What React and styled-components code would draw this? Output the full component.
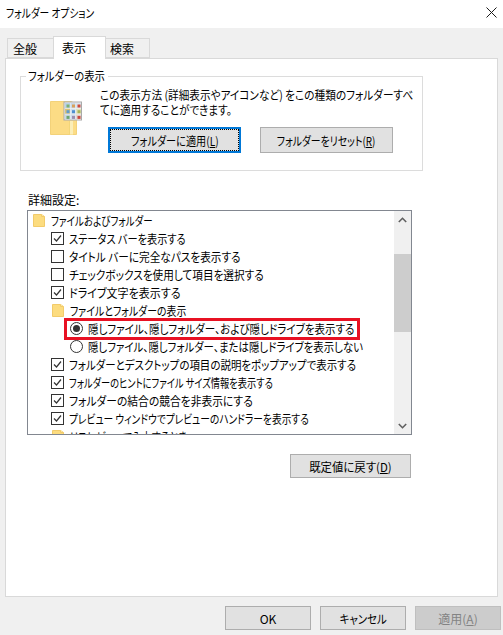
import React from "react";
import styled, { createGlobalStyle } from "styled-components";

const GlobalStyle = createGlobalStyle`
  html, body {
    margin: 0;
    padding: 0;
    background: #f0f0f0;
  }
  * {
    box-sizing: border-box;
  }
`;

const Dialog = styled.div`
  width: 503px;
  height: 635px;
  display: flex;
  flex-direction: column;
  overflow: hidden;
  background: #f0f0f0;
  color: #000;
  font-family: "Noto Sans CJK JP", "Noto Sans", sans-serif;
  font-size: 12px;
  font-feature-settings: "palt";
  line-height: 15px;
  white-space: nowrap;
`;

// Noto kana are wider than the dialog font, so texts get squeezed to the same width
const Squeeze = styled.span`
  display: inline-block;
  transform: scaleX(${(p) => p.$x});
  transform-origin: ${(p) => (p.$center ? "center" : "left")};
`;

const TitleBar = styled.div`
  height: 28px;
  flex: none;
  display: flex;
  align-items: center;
  justify-content: space-between;
  padding: 0 6px 4px 6px;
  background: #fff;
`;

const TabBar = styled.div`
  height: 22px;
  margin-top: 8px;
  padding-left: 7px;
  flex: none;
  display: flex;
  align-items: flex-end;
  position: relative;
  z-index: 1;
`;

const Tab = styled.div`
  height: ${(p) => (p.$active ? 23 : 20)}px;
  width: ${(p) => p.$width}px;
  margin-bottom: ${(p) => (p.$active ? -1 : 0)}px;
  margin-left: ${(p) => (p.$first ? 0 : -1)}px;
  padding: ${(p) => (p.$active ? "0 11px 2px 0" : "0 11px 0 0")};
  display: flex;
  align-items: center;
  justify-content: center;
  font-size: 12px;
  background: ${(p) => (p.$active ? "#fff" : "#f0f0f0")};
  border: 1px solid #d9d9d9;
  border-bottom: ${(p) => (p.$active ? "none" : "1px solid #d9d9d9")};
`;

const Panel = styled.div`
  width: 493px;
  height: 539px;
  margin-left: 5px;
  flex: none;
  padding: 9px 14px 0 14px;
  display: flex;
  flex-direction: column;
  align-items: flex-start;
  background: #fff;
  border: 1px solid #d9d9d9;
`;

const Group = styled.fieldset`
  width: 403px;
  height: 103px;
  min-width: 0;
  margin: 0;
  padding: 0 0 0 29px;
  display: flex;
  border: 1px solid #dcdcdc;
`;

const GroupLabel = styled.legend`
  margin-left: -24px;
  padding: 0 1px 0 2px;
  width: 82px;
  height: 16px;
  line-height: 16px;
`;

const GroupIcon = styled.svg`
  width: 32px;
  height: 34px;
  margin-top: 17px;
  flex: none;
`;

const GroupContent = styled.div`
  margin-left: 18px;
  padding-top: 3px;
`;

const GroupLine = styled.div`
  height: 15px;
`;

const GroupButtons = styled.div`
  display: flex;
  gap: 19px;
  margin: 10px 0 0 8px;
`;

const Button = styled.button`
  width: ${(p) => p.$width}px;
  height: ${(p) => p.$height}px;
  margin: 0;
  padding: 0;
  flex: none;
  overflow: hidden;
  font: inherit;
  font-feature-settings: inherit;
  color: ${(p) => (p.$disabled ? "#838383" : "#000")};
  background: ${(p) => (p.$disabled ? "#cccccc" : "#e1e1e1")};
  border: ${(p) =>
    p.$focused ? "2px solid #0078d7" : `1px solid ${p.$disabled ? "#bfbfbf" : "#adadad"}`};
  outline: ${(p) => (p.$focused ? "1px dotted #000" : "none")};
  outline-offset: ${(p) => (p.$focused ? "-3px" : "0")};
`;

const SectionLabel = styled.div`
  height: 15px;
  margin: 21px 0 0 8px;
`;

const ListBox = styled.div`
  width: 385px;
  height: 225px;
  margin: 3px 0 0 7px;
  flex: none;
  display: flex;
  background: #fff;
  border: 1px solid #828790;
  align-self: flex-start;
`;

const ListBody = styled.div`
  flex: 1;
  min-width: 0;
  overflow: hidden;
`;

const Row = styled.div`
  height: 18px;
  padding-left: ${(p) => p.$indent}px;
  display: flex;
  align-items: center;
  gap: ${(p) => p.$gap}px;
  position: relative;
`;

const Highlight = styled.div`
  position: absolute;
  left: 36px;
  top: -1px;
  width: 296px;
  height: 22px;
  border: 3px solid #e81123;
  pointer-events: none;
`;

const CheckBox = styled.span`
  width: 13px;
  height: 13px;
  flex: none;
  display: flex;
  background: #fff;
  border: 1px solid #333;
`;

const Radio = styled.span`
  width: 13px;
  height: 13px;
  flex: none;
  display: flex;
  align-items: center;
  justify-content: center;
  background: #fff;
  border: 1px solid #333;
  border-radius: 50%;
`;

const RadioDot = styled.span`
  width: 7px;
  height: 7px;
  background: #333;
  border-radius: 50%;
`;

const ScrollBar = styled.div`
  width: 17px;
  flex: none;
  display: flex;
  flex-direction: column;
  background: #f0f0f0;
`;

const ScrollArrow = styled.div`
  height: 17px;
  flex: none;
  display: flex;
  align-items: center;
  justify-content: center;
`;

const ScrollTrack = styled.div`
  flex: 1;
  padding-top: 26px;
`;

const ScrollThumb = styled.div`
  height: 78px;
  background: #cdcdcd;
`;

const DefaultsButton = styled(Button)`
  margin: 19px 0 0 270px;
`;

const Footer = styled.div`
  margin-top: 9px;
  margin-left: 225px;
  display: flex;
  gap: 9px;
`;

const CloseIcon = () => (
  <svg width="11" height="11" viewBox="0 0 11 11">
    <path d="M0.5 0.5L10.5 10.5M10.5 0.5L0.5 10.5" stroke="#1a1a1a" fill="none" />
  </svg>
);

const SmallFolder = () => (
  <svg width="12" height="13" viewBox="0 0 12 13" style={{ flex: "none" }}>
    <path d="M0.5 0.5H8.5L11.5 2.5V12.5H0.5Z" fill="#fcdc7f" stroke="#f2cb6a" />
    <path d="M8.5 0.5V2.5H11.5" fill="#fdeaa8" stroke="#f2cb6a" />
  </svg>
);

const CheckMark = () => (
  <svg width="11" height="11" viewBox="0 0 11 11">
    <path d="M2 5.5L4.5 8L9 2.5" stroke="#333" strokeWidth="1.2" fill="none" />
  </svg>
);

const Arrow = ({ up }) => (
  <svg width="9" height="6" viewBox="0 0 9 6">
    <path
      d={up ? "M0.8 5L4.5 1.3L8.2 5" : "M0.8 1L4.5 4.7L8.2 1"}
      stroke="#606060"
      strokeWidth="1.6"
      fill="none"
    />
  </svg>
);

const cells = [
  ["#b9d2e8", "#7fb06f"],
  ["#c7d9ea", "#d9a15c"],
  ["#d9e3ee", "#cf4b3c"],
  ["#d9c27a", "#5f9bcf"],
  ["#cfe0ee", "#4f8fd0"],
  ["#dfe3c0", "#a8b45a"],
  ["#c9d8e6", "#6fa56a"],
  ["#cfdceb", "#9c8fb0"],
  ["#e5d6cf", "#c9493f"],
];

const BigFolder = () => (
  <GroupIcon viewBox="0 0 32 34">
    <path d="M0.5 0.5H21L26.5 3V33.5H0.5Z" fill="#fcdc85" stroke="#f3d27a" />
    <path d="M21.5 20V33.5" stroke="#fbeeb8" strokeWidth="3" />
    <path d="M19.5 20V33" stroke="#f3d679" />
    <rect x="14" y="1" width="17.5" height="18" fill="#f2f2f2" stroke="#a9a9a9" />
    {cells.map(([bg, fg], i) => {
      const x = 15 + (i % 3) * 5.5;
      const y = 2 + Math.floor(i / 3) * 5.7;
      return (
        <g key={i}>
          <rect x={x} y={y} width="5" height="5" fill={bg} />
          <rect x={x + 1.5} y={y + 1.5} width="3" height="3" fill={fg} />
        </g>
      );
    })}
  </GroupIcon>
);

const rows = [
  { type: "root", x: 0.79, text: "ファイルおよびフォルダー" },
  { type: "check", x: 0.85, checked: true, text: "ステータス バーを表示する" },
  { type: "check", x: 0.887, text: "タイトル バーに完全なパスを表示する" },
  { type: "check", x: 0.886, text: "チェックボックスを使用して項目を選択する" },
  { type: "check", x: 0.917, checked: true, text: "ドライブ文字を表示する" },
  { type: "folder", x: 0.824, text: "ファイルとフォルダーの表示" },
  { type: "radio", x: 0.875, checked: true, mark: true, text: "隠しファイル、隠しフォルダー、および隠しドライブを表示する" },
  { type: "radio", x: 0.867, text: "隠しファイル、隠しフォルダー、または隠しドライブを表示しない" },
  { type: "check", x: 0.872, checked: true, text: "フォルダーとデスクトップの項目の説明をポップアップで表示する" },
  { type: "check", x: 0.77, checked: true, text: "フォルダーのヒントにファイル サイズ情報を表示する" },
  { type: "check", x: 0.897, checked: true, text: "フォルダーの結合の競合を非表示にする" },
  { type: "check", x: 0.81, checked: true, text: "プレビュー ウィンドウでプレビューのハンドラーを表示する" },
  { type: "folder", x: 0.82, text: "リスト ビューで入力するとき" },
];

const SettingRow = ({ type, checked, mark, text, x }) => {
  const label = <Squeeze $x={x}>{text}</Squeeze>;
  if (type === "root") {
    return (
      <Row $indent={5} $gap={6}>
        <SmallFolder />
        {label}
      </Row>
    );
  }
  if (type === "folder") {
    return (
      <Row $indent={24} $gap={6}>
        <SmallFolder />
        {label}
      </Row>
    );
  }
  if (type === "radio") {
    return (
      <Row $indent={42} $gap={5}>
        <Radio>{checked && <RadioDot />}</Radio>
        {label}
        {mark && <Highlight />}
      </Row>
    );
  }
  return (
    <Row $indent={23} $gap={5}>
      <CheckBox>{checked && <CheckMark />}</CheckBox>
      {label}
    </Row>
  );
};

export default function App() {
  return (
    <Dialog>
      <GlobalStyle />
      <TitleBar>
        <Squeeze $x={0.81}>フォルダー オプション</Squeeze>
        <CloseIcon />
      </TitleBar>
      <TabBar>
        <Tab $first $width={47}>全般</Tab>
        <Tab $active $width={53}>表示</Tab>
        <Tab $width={45}>検索</Tab>
      </TabBar>
      <Panel>
        <Group>
          <GroupLabel>
            <Squeeze $x={0.865}>フォルダーの表示</Squeeze>
          </GroupLabel>
          <BigFolder />
          <GroupContent>
            <GroupLine>
              <Squeeze $x={0.887}>この表示方法 (詳細表示やアイコンなど) をこの種類のフォルダーすべ</Squeeze>
            </GroupLine>
            <GroupLine>
              <Squeeze $x={0.885}>てに適用することができます。</Squeeze>
            </GroupLine>
            <GroupButtons>
              <Button $focused $width={133} $height={26}>
                <Squeeze $center $x={0.846}>フォルダーに適用(<u>L</u>)</Squeeze>
              </Button>
              <Button $width={133} $height={26}>
                <Squeeze $center $x={0.82}>フォルダーをリセット(<u>R</u>)</Squeeze>
              </Button>
            </GroupButtons>
          </GroupContent>
        </Group>
        <SectionLabel>詳細設定:</SectionLabel>
        <ListBox>
          <ListBody>
            {rows.map((row) => (
              <SettingRow key={row.text} {...row} />
            ))}
          </ListBody>
          <ScrollBar>
            <ScrollArrow>
              <Arrow up />
            </ScrollArrow>
            <ScrollTrack>
              <ScrollThumb />
            </ScrollTrack>
            <ScrollArrow>
              <Arrow />
            </ScrollArrow>
          </ScrollBar>
        </ListBox>
        <DefaultsButton $width={121} $height={24}>
          <Squeeze $center $x={0.95}>既定値に戻す(<u>D</u>)</Squeeze>
        </DefaultsButton>
      </Panel>
      <Footer>
        <Button $width={86} $height={24}>OK</Button>
        <Button $width={86} $height={24}>
          <Squeeze $center $x={0.87}>キャンセル</Squeeze>
        </Button>
        <Button $disabled $width={86} $height={24}>
          適用(<u>A</u>)
        </Button>
      </Footer>
    </Dialog>
  );
}
